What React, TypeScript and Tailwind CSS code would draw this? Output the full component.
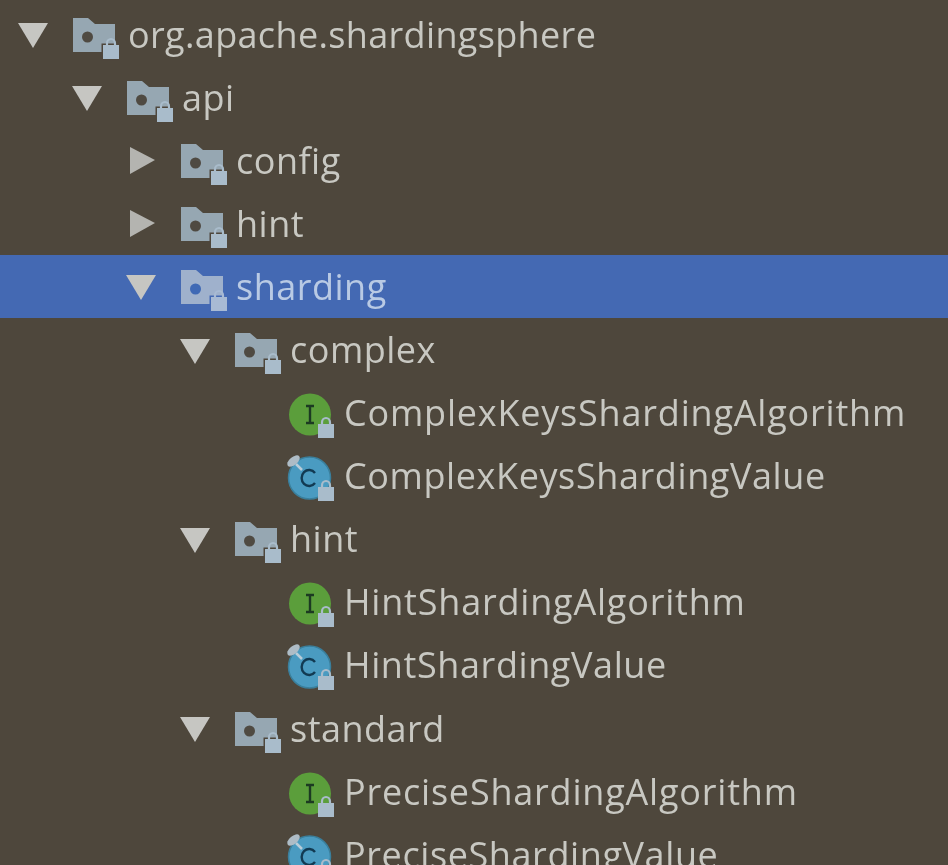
const SEL = "#4469b3";

type Row = {
  label: string;
  indent: string;
  kind: "package" | "interface" | "class";
  arrow?: "open" | "closed";
  selected?: boolean;
};

const rows: Row[] = [
  { label: "org.apache.shardingsphere", indent: "pl-[18px]", kind: "package", arrow: "open" },
  { label: "api", indent: "pl-[72px]", kind: "package", arrow: "open" },
  { label: "config", indent: "pl-[126px]", kind: "package", arrow: "closed" },
  { label: "hint", indent: "pl-[126px]", kind: "package", arrow: "closed" },
  { label: "sharding", indent: "pl-[126px]", kind: "package", arrow: "open", selected: true },
  { label: "complex", indent: "pl-[180px]", kind: "package", arrow: "open" },
  { label: "ComplexKeysShardingAlgorithm", indent: "pl-[234px]", kind: "interface" },
  { label: "ComplexKeysShardingValue", indent: "pl-[234px]", kind: "class" },
  { label: "hint", indent: "pl-[180px]", kind: "package", arrow: "open" },
  { label: "HintShardingAlgorithm", indent: "pl-[234px]", kind: "interface" },
  { label: "HintShardingValue", indent: "pl-[234px]", kind: "class" },
  { label: "standard", indent: "pl-[180px]", kind: "package", arrow: "open" },
  { label: "PreciseShardingAlgorithm", indent: "pl-[234px]", kind: "interface" },
  { label: "PreciseShardingValue", indent: "pl-[234px]", kind: "class" },
];

function Arrow({ dir }: { dir?: "open" | "closed" }) {
  if (!dir) return <span className="w-[30px] shrink-0" />;
  return (
    <svg width="30" height="30" viewBox="0 0 30 30" className="shrink-0 mt-[1px]">
      {dir === "open" ? (
        <polygon points="0,3 30,3 15,28" fill="#c6c6c2" />
      ) : (
        <polygon points="4,1 29,14 4,28" fill="#b4b4b0" />
      )}
    </svg>
  );
}

// padlock, 16 wide and 21 high, with an optional cut-out round the body
function Lock({ x, y, fill, stroke }: { x: number; y: number; fill: string; stroke?: string }) {
  return (
    <g transform={`translate(${x} ${y})`}>
      {stroke && <rect x="-1.5" y="5.5" width="19" height="17" fill={stroke} />}
      <path d="M4 8 V5.5 a4 4.5 0 0 1 8 0 V8" fill="none" stroke={fill} strokeWidth="2.2" />
      <rect x="0" y="7" width="16" height="14" fill={fill} />
    </g>
  );
}

function PackageIcon({ selected }: { selected?: boolean }) {
  const bg = selected ? SEL : "#4e473c";
  return (
    <svg width="46" height="44" viewBox="0 0 46 44" className="shrink-0 mt-[10px]">
      <path d="M0 0 H15 L22 6 H42 V34 H0 Z" fill={selected ? "#9fb1cc" : "#96a7b2"} />
      <circle cx="14.5" cy="19" r="5.5" fill={selected ? "#3f69b5" : "#4f4a42"} />
      <Lock x={30} y={20} fill={selected ? "#a8bad4" : "#a9bccb"} stroke={bg} />
    </svg>
  );
}

function InterfaceIcon() {
  return (
    <svg width="46" height="46" viewBox="0 0 46 46" className="shrink-0 overflow-visible">
      <circle cx="21" cy="24.5" r="21" fill="#5b9e3b" />
      <path d="M17 16 H25 M21 16 V33 M17 33 H25" fill="none" stroke="#1c3a22" strokeWidth="2.4" />
      <Lock x={29} y={27} fill="#a9bccb" />
    </svg>
  );
}

function ClassIcon() {
  return (
    <svg width="46" height="50" viewBox="0 0 46 50" className="shrink-0 overflow-visible">
      <circle cx="20.5" cy="27" r="21" fill="#4a9bc1" stroke="#3a7f9c" strokeWidth="1.5" />
      <path d="M26 22 A7.5 8 0 1 0 26 32" fill="none" stroke="#123a52" strokeWidth="2.4" />
      <line x1="7" y1="13" x2="13" y2="19" stroke="#b8ccd8" strokeWidth="2.5" />
      <ellipse cx="4.5" cy="10" rx="7.5" ry="4" transform="rotate(-40 4.5 10)" fill="#aebcc6" />
      <Lock x={29} y={29} fill="#a9bccb" />
    </svg>
  );
}

function trackingFor(row: Row) {
  if (row.kind === "interface") return "tracking-[0.8px]";
  if (row.kind === "class") return "tracking-[0.6px]";
  if (row.label.startsWith("org")) return "tracking-[0.35px]";
  return "tracking-[0.5px]";
}

export default function App() {
  return (
    <div className="h-[865px] w-[948px] overflow-hidden bg-[#4e473c]">
      <div className="pt-[3px] blur-[0.5px] font-['Open_Sans','Noto_Sans',sans-serif]">
        {rows.map((row, i) => (
          <div
            key={i}
            className={`flex h-[63.1px] items-center ${row.indent} ${row.selected ? "bg-[#4469b3]" : ""}`}
          >
            <Arrow dir={row.arrow} />
            <span className="ml-[25px] flex w-[55px] shrink-0 items-center">
              {row.kind === "package" && <PackageIcon selected={row.selected} />}
              {row.kind === "interface" && <InterfaceIcon />}
              {row.kind === "class" && <ClassIcon />}
            </span>
            <span
              className={`whitespace-nowrap text-[36px] leading-none ${trackingFor(row)} ${row.selected ? "text-[#b9cae4]" : "text-[#c8c8c2]"}`}
            >
              {row.label}
            </span>
          </div>
        ))}
      </div>
    </div>
  );
}
